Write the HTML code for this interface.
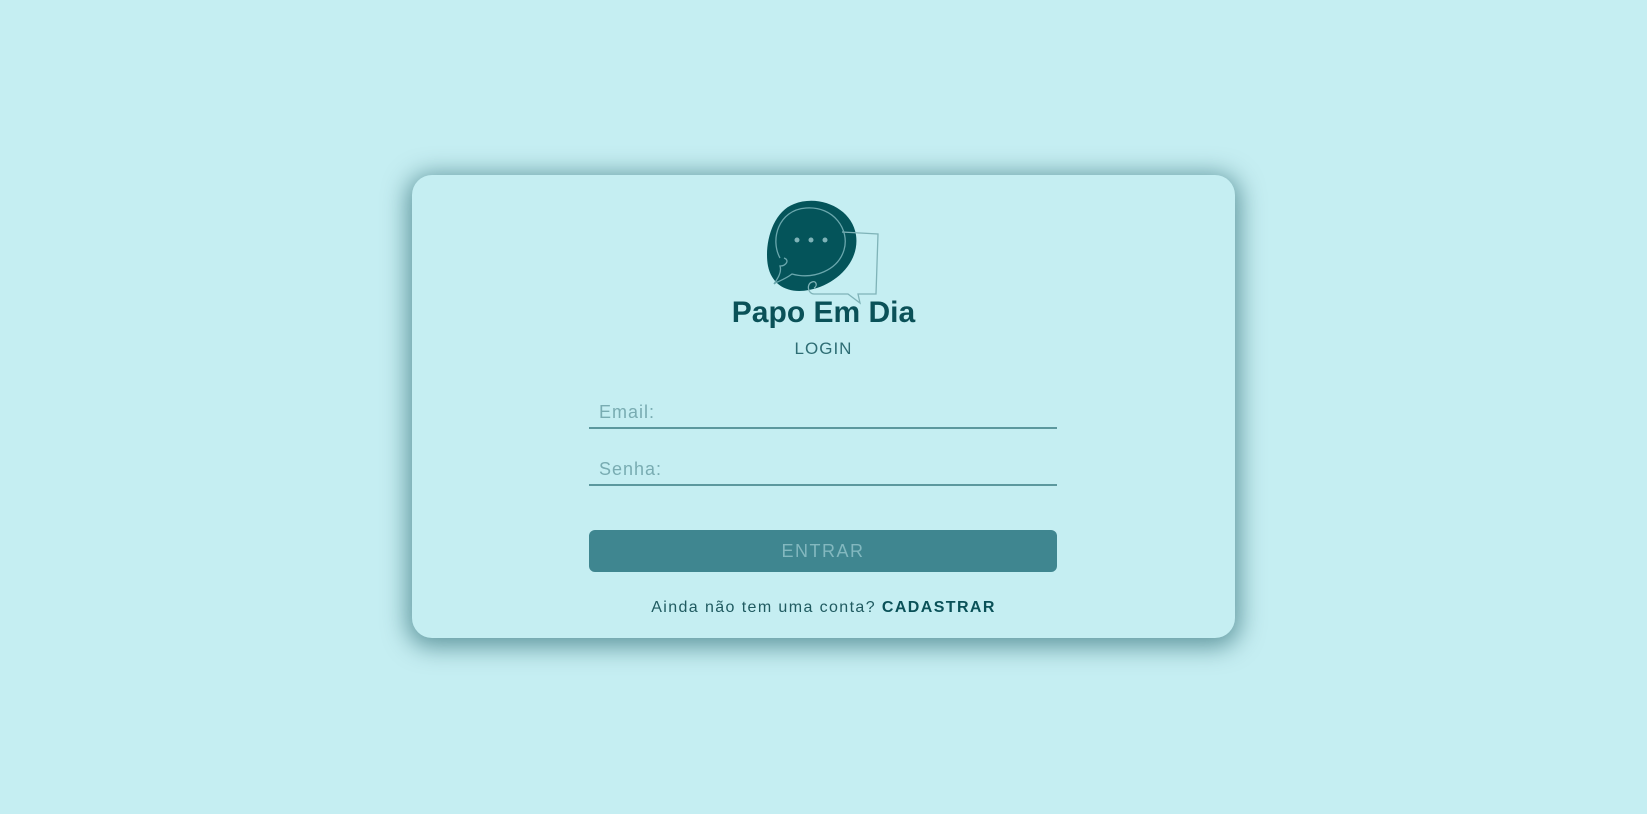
<!DOCTYPE html>
<html><head><meta charset="utf-8"><style>
html,body{margin:0;padding:0;width:1647px;height:814px;background:#c5eef2;font-family:"Liberation Sans",sans-serif;overflow:hidden}
.card{position:absolute;left:412px;top:175px;width:823px;height:463px;background:#c5eef2;border-radius:20px;box-shadow:0 4px 24px 5px rgba(0,70,80,.5)}
.logo{position:absolute;left:352px;top:25px}
.title{position:absolute;left:0;width:100%;top:121px;text-align:center;font-weight:bold;font-size:30px;color:#0a5158}
.login{position:absolute;left:0;width:100%;top:164px;text-align:center;font-size:17px;color:#2e6d74;letter-spacing:1px}
.field{position:absolute;left:177px;width:468px;border-bottom:2px solid #5c989e;color:#79acb2;font-size:18px;letter-spacing:1px;padding-left:10px;box-sizing:border-box}
.btn{position:absolute;left:177px;top:355px;width:468px;height:42px;background:#3f8690;border-radius:6px;color:#83b8bf;text-align:center;line-height:42px;font-size:18px;letter-spacing:1.5px}
.foot{position:absolute;left:0;width:100%;top:424px;text-align:center;font-size:16px;color:#1f5a60;letter-spacing:1.4px}
.foot b{color:#0a5158}
</style></head><body>
<div class="card">
<svg class="logo" width="120" height="105" viewBox="0 0 120 105">
<path d="M30 4 C55 -6 88 8 92 35 C96 62 72 85 45 90 C25 94 8 86 4 66 C0 45 8 12 30 4Z" fill="#04545a"/>
<path d="M78 32 L114 34 L112 94 L94 94 L96 103 L84 94 L50 94 C44 94 42 84 48 82 C52 80 54 86 50 88" fill="none" stroke="#7fb3b8" stroke-width="1.3"/>
<path d="M16 58 C6 40 14 10 42 8 C70 6 86 30 80 50 C74 70 50 80 28 74 C20 80 12 82 10 84 C14 78 18 72 16 66 C22 66 26 60 20 58" fill="none" stroke="#6aa7ad" stroke-width="1.3"/>
<circle cx="33" cy="40" r="2.5" fill="#7fb3b8"/><circle cx="47" cy="40" r="2.5" fill="#7fb3b8"/><circle cx="61" cy="40" r="2.5" fill="#7fb3b8"/>
</svg>
<div class="title">Papo Em Dia</div>
<div class="login">LOGIN</div>
<div class="field" style="top:222px;height:32px;line-height:30px">Email:</div>
<div class="field" style="top:279px;height:32px;line-height:30px">Senha:</div>
<div class="btn">ENTRAR</div>
<div class="foot">Ainda não tem uma conta? <b>CADASTRAR</b></div>
</div>
</body></html>
